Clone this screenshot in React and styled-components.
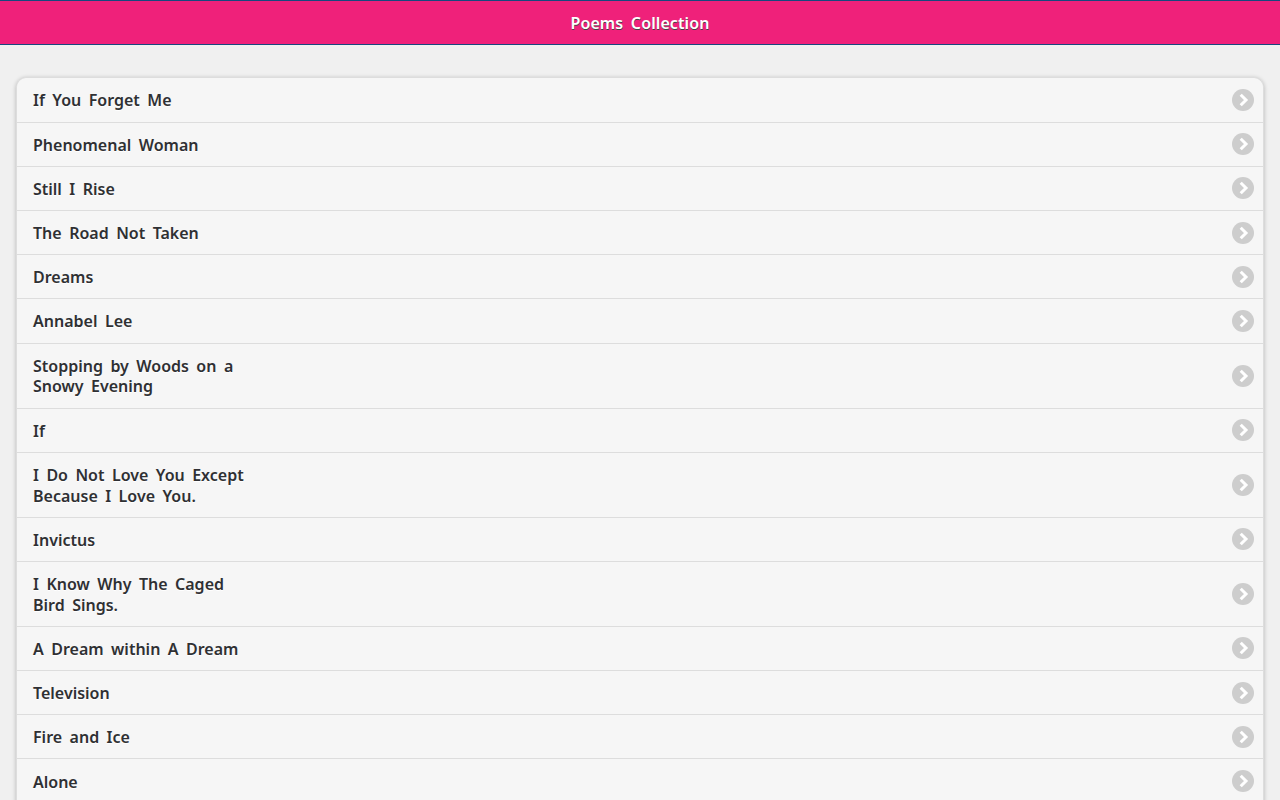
import React from 'react';
import styled, { createGlobalStyle } from 'styled-components';

const Global = createGlobalStyle`
  html, body { margin: 0; padding: 0; height: 800px; overflow: hidden; background: #f0f0f0; }
  body { font-family: "Noto Sans", "DejaVu Sans", sans-serif; font-size: 16px; }
`;

const Page = styled.div`
  height: 800px;
  overflow: hidden;
  background: #f0f0f0;
`;

const Header = styled.header`
  box-sizing: border-box;
  height: 45px;
  display: flex;
  align-items: center;
  justify-content: center;
  padding-top: 1px;
  background: #ef217a;
  border-top: 1px solid #17477e;
  border-bottom: 1px solid #17477e;
  color: #fff;
  font-weight: 600;
  font-size: 16px;
  word-spacing: 3.3px;
  letter-spacing: 0.1px;
  text-shadow: 0 1px 0 #444;
`;

const Content = styled.main`
  padding: 32.4px 16px 0;
`;

const List = styled.ul`
  list-style: none;
  margin: 0;
  padding: 0;
  background: #f6f6f6;
  border: 1px solid #ddd;
  border-bottom: 0;
  border-radius: 10px 10px 0 0;
  box-shadow: 0 1px 4px rgba(0, 0, 0, 0.25);
`;

const Row = styled.li`
  display: flex;
  align-items: center;
  justify-content: space-between;
  padding: 0 9px 0 16px;
  border-bottom: 1px solid #ddd;
  &:last-child { border-bottom: 0; }
`;

const Title = styled.span`
  padding: 12.1px 0 10.3px;
  color: #2f3033;
  font-weight: 600;
  font-size: 16px;
  line-height: 20.8px;
  word-spacing: 3.3px;
  text-shadow: 0 1px 0 #fff;
`;

const Chevron = styled.svg`
  width: 22px;
  height: 22px;
  flex: none;
`;

const poems = [
  ['If You Forget Me'], ['Phenomenal Woman'], ['Still I Rise'], ['The Road Not Taken'],
  ['Dreams'], ['Annabel Lee'], ['Stopping by Woods on a', 'Snowy Evening'], ['If'],
  ['I Do Not Love You Except', 'Because I Love You.'], ['Invictus'],
  ['I Know Why The Caged', 'Bird Sings.'], ['A Dream within A Dream'], ['Television'],
  ['Fire and Ice'], ['Alone'],
];

export default function App() {
  return (
    <Page>
      <Global />
      <Header>Poems Collection</Header>
      <Content>
        <List>
          {poems.map((lines) => (
            <Row key={lines[0]}>
              <Title>
                {lines.map((l, i) => (
                  <React.Fragment key={l}>{i > 0 && <br />}{l}</React.Fragment>
                ))}
              </Title>
              <Chevron viewBox="0 0 22 22" aria-hidden="true">
                <circle cx="11" cy="11" r="11" fill="#cdcdcd" />
                <path d="M8.7 5.7 L14 11 L8.7 16.3" fill="none" stroke="#fff" strokeWidth="3" />
              </Chevron>
            </Row>
          ))}
        </List>
      </Content>
    </Page>
  );
}
